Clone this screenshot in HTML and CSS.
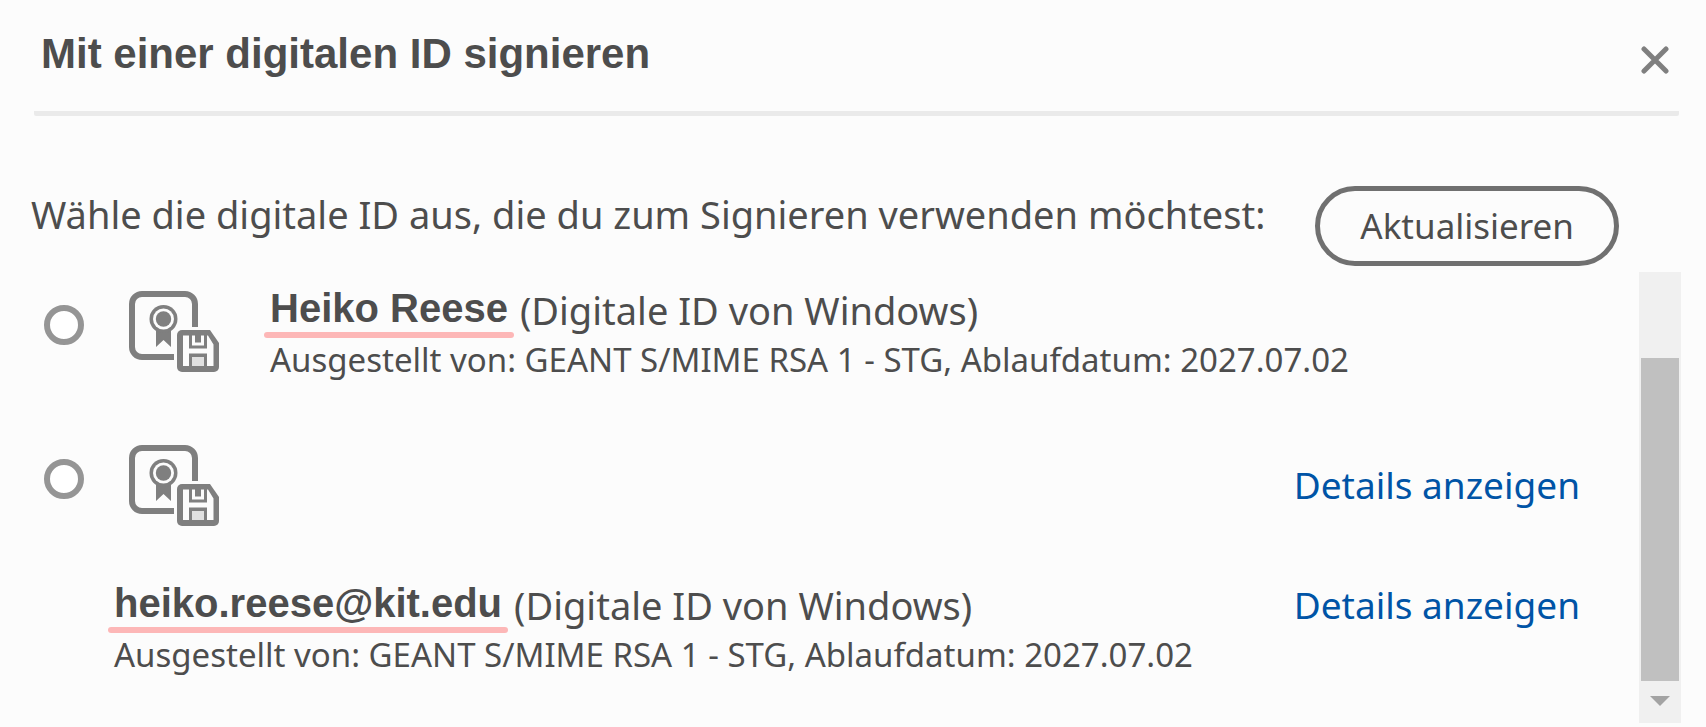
FILE: index.html
```html
<!DOCTYPE html>
<html lang="de">
<head>
<meta charset="utf-8">
<meta name="viewport" content="width=device-width, initial-scale=1">
<title>Mit einer digitalen ID signieren</title>
<link rel="stylesheet" href="styles.css">
</head>
<body>
<svg width="0" height="0" class="sprite" aria-hidden="true">
  <symbol id="cert" viewBox="0 0 90 81">
    <path d="M66 36V13a10 10 0 0 0-10-10H13a10 10 0 0 0-10 10v43a10 10 0 0 0 10 10h32" fill="none" stroke="#7f7f7f" stroke-width="6"/>
    <path d="M27 34h15v22l-7.500-7-7.500 7z" fill="#7f7f7f"/>
    <circle cx="34.500" cy="28" r="14" fill="#7f7f7f"/>
    <circle cx="34.500" cy="28" r="10.500" fill="#fcfcfc"/>
    <circle cx="34.500" cy="28" r="7.700" fill="#7f7f7f"/>
    <path d="M53 39h28l9 13v24a5 5 0 0 1-5 5H53a5 5 0 0 1-5-5V44a5 5 0 0 1 5-5z" fill="#7f7f7f"/>
    <path d="M54 44.500h6v13h18v-13h1l5.500 9V75H78V62.500H60V75h-6z" fill="#fcfcfc"/>
    <path d="M63 44.500h3v7h6v-7h3v10H63z" fill="#fcfcfc"/>
    <path d="M63 66h12v9H63z" fill="#e0e0e0"/>
  </symbol>
</svg>
<main class="dialog">
  <header class="header">
    <h1 class="title">Mit einer digitalen ID signieren</h1>
    <button class="close" type="button" aria-label="Schließen">
      <svg width="28" height="28" viewBox="0 0 28 28"><path d="M3 3l22 22M25 3L3 25" stroke="#7f7f7f" stroke-width="5" stroke-linecap="round"/></svg>
    </button>
  </header>
  <div class="prompt">
    <p class="prompt-text" id="prompt">Wähle die digitale ID aus, die du zum Signieren verwenden möchtest:</p>
    <button class="refresh" type="button">Aktualisieren</button>
  </div>
  <div class="body">
    <div class="list" role="radiogroup" aria-labelledby="prompt">
      <div class="row">
        <input class="radio" type="radio" name="id" id="id1">
        <svg class="cert" aria-hidden="true"><use href="#cert"/></svg>
        <label class="info" for="id1">
          <span class="line"><strong class="name">Heiko Reese</strong><span class="source">(Digitale ID von Windows)</span></span>
          <span class="issuer">Ausgestellt von: GEANT S/MIME RSA 1 - STG, Ablaufdatum: 2027.07.02</span>
        </label>
      </div>
      <div class="row">
        <input class="radio" type="radio" name="id" id="id2" aria-labelledby="name2">
        <svg class="cert" aria-hidden="true"><use href="#cert"/></svg>
        <a class="details" href="#">Details anzeigen</a>
      </div>
      <div class="row row-detached">
        <label class="info" id="name2" for="id2">
          <span class="line"><strong class="name">heiko.reese@kit.edu</strong><span class="source">(Digitale ID von Windows)</span></span>
          <span class="issuer">Ausgestellt von: GEANT S/MIME RSA 1 - STG, Ablaufdatum: 2027.07.02</span>
        </label>
        <a class="details" href="#">Details anzeigen</a>
      </div>
    </div>
    <div class="scrollbar" aria-hidden="true">
      <div class="thumb"></div>
      <svg class="arrow" width="20" height="10" viewBox="0 0 20 10"><path d="M0 0h20L10 10z" fill="#a3a3a3"/></svg>
    </div>
  </div>
</main>
</body>
</html>
```
FILE: styles.css
```css
* { box-sizing: border-box; }

body {
  margin: 0;
  background: #fcfcfc;
  color: #4d4d4d;
  font-family: "Noto Sans", "Open Sans", sans-serif;
  font-size: 38px;
  line-height: 52px;
}

.sprite { position: absolute; }

.dialog { padding: 0 25px 4px 34px; }

.header {
  display: flex;
  justify-content: space-between;
  align-items: flex-start;
  height: 116px;
  margin-right: 2px;
  padding: 28px 10px 0 7px;
  border-bottom: 5px solid #eaeaea;
  border-radius: 2px;
}

.title {
  margin: 0;
  font: bold 42px/52px "Liberation Sans", Arial, sans-serif;
}

.close {
  display: flex;
  margin-top: 18px;
  padding: 0;
  border: 0;
  background: none;
}

.prompt {
  display: flex;
  justify-content: space-between;
  align-items: flex-start;
  padding: 70px 62px 0 0;
  margin-left: -3px;
}

.prompt-text { margin: 2px 0 0; white-space: nowrap; }

.refresh {
  height: 80px;
  padding: 0 40px;
  border: 5px solid #707070;
  border-radius: 40px;
  background: none;
  color: inherit;
  font: inherit;
  font-size: 35px;
}

.body { display: flex; margin-top: 6px; }

.list { flex: 1; padding-top: 12px; }

.row {
  display: flex;
  align-items: flex-start;
  height: 154px;
  padding: 0 59px 0 10px;
}

.row + .row { height: 141px; }

.row.row-detached { height: 98px; padding-left: 80px; }

.radio {
  appearance: none;
  width: 40px;
  height: 40px;
  margin: 21px 45px 0 0;
  border: 6px solid #959595;
  border-radius: 50%;
  background: #fff;
}

.cert { width: 90px; height: 81px; margin: 7px 51px 0 0; }

.info { display: block; white-space: nowrap; }

.line { display: flex; gap: 12px; }

.name {
  position: relative;
  font: bold 40px/48px "Liberation Sans", Arial, sans-serif;
}

.name::after {
  content: "";
  position: absolute;
  left: -6px;
  right: -6px;
  bottom: -2px;
  height: 6px;
  border-radius: 3px;
  background: rgba(255, 80, 80, 0.4);
}

.issuer { display: block; font-size: 33px; line-height: 48px; }

.details {
  margin: 21px 0 0 auto;
  color: #0054a6;
  font-size: 37px;
  text-decoration: none;
  white-space: nowrap;
}

.row-detached .details { margin-top: 0; }

.scrollbar {
  display: flex;
  flex-direction: column;
  align-items: center;
  width: 42px;
  padding: 86px 2px 17px;
  background: #f0f0f0;
}

.thumb { width: 100%; height: 323px; background: #c0c0c0; }

.arrow { margin-top: 15px; }
```
